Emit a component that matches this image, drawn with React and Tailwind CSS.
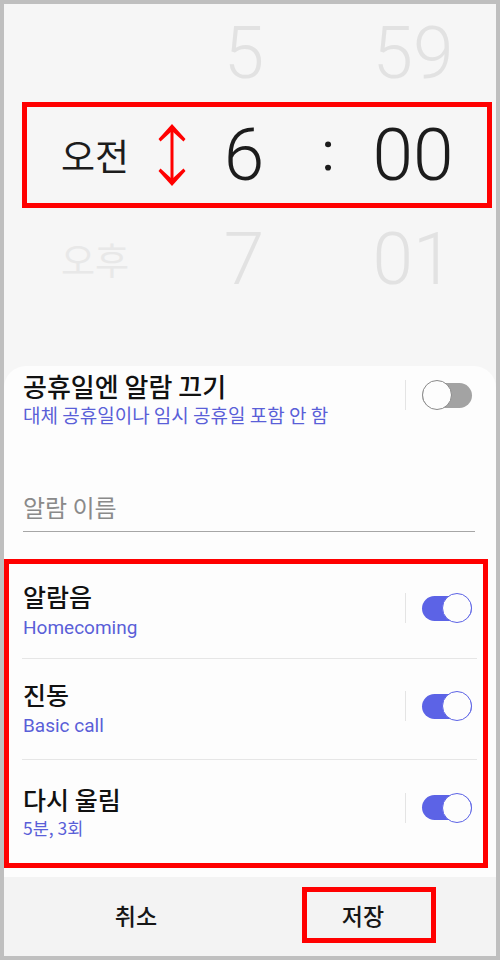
import React from 'react';

const BLUE_TEXT = 'text-[#5a5fd8]';

function UpDownArrow() {
  return (
    <svg width="28" height="62" viewBox="0 0 28 62" className="shrink-0">
      <rect x="12.5" y="4" width="3" height="54" fill="#ff0000" />
      <path d="M14 0 L27.5 15 L25.5 17.5 L14 7 L2.5 17.5 L0.5 15 Z" fill="#ff0000" />
      <path d="M14 62 L27.5 47 L25.5 44.5 L14 55 L2.5 44.5 L0.5 47 Z" fill="#ff0000" />
    </svg>
  );
}

function Toggle({ on }) {
  return (
    <div className="w-[50px] h-[30px] flex items-center">
      <div
        className={
          on
            ? 'w-full h-[25px] rounded-full bg-[#5c63e6] flex items-center justify-end'
            : 'w-full h-[25px] rounded-full bg-[#a3a3a3] flex items-center justify-start'
        }
      >
        <div
          className={
            on
              ? 'w-[30px] h-[30px] shrink-0 rounded-full bg-[#fdfdfd] border-[1.5px] border-[#5c63e6]'
              : 'w-[30px] h-[30px] shrink-0 rounded-full bg-[#fdfdfd] border-[1.5px] border-[#8a8a8a]'
          }
        />
      </div>
    </div>
  );
}

function SettingRow({ title, sub, on, titleClass = 'text-[25px]', subClass = 'text-[19px]', className = '' }) {
  return (
    <div className={`flex items-center ${className}`}>
      <div className="flex-1 flex flex-col">
        <span className={`${titleClass} leading-[32px] font-medium text-[#111]`}>{title}</span>
        <span className={`${subClass} leading-[26px] ${BLUE_TEXT}`}>{sub}</span>
      </div>
      <div className="flex items-center pb-[8px]">
        <div className="w-px h-[30px] bg-[#e4e4e4]" />
        <div className="ml-[16px]">
          <Toggle on={on} />
        </div>
      </div>
    </div>
  );
}

export default function App() {
  const digit = 'text-[73px] font-light leading-none text-center';
  return (
    <div className="w-[500px] h-[960px] border-4 border-[#bfbfbf] bg-[#f6f6f6] flex flex-col font-['Roboto','Noto_Sans_CJK_KR',sans-serif]">
      {/* 시간 선택 */}
      <div className="h-[362px] flex flex-col">
        <div className="h-[98px] flex items-center text-[#e2e2e2]">
          <div className="w-[182px]" />
          <div className={`w-[116px] ${digit}`}>5</div>
          <div className="w-[52px]" />
          <div className={`w-[118px] ${digit}`}>59</div>
        </div>

        <div className="h-[106px] ml-[18px] mr-[4px] border-[5px] border-[#ff0000] flex items-center text-[#1c1c1c]">
          <div className="ml-[34px] w-[69px] text-[37px] leading-none font-['Noto_Sans_CJK_KR',sans-serif]">오전</div>
          <div className="ml-[28px] w-[28px] flex">
            <UpDownArrow />
          </div>
          <div className={`w-[116px] ${digit}`}>6</div>
          <div className="w-[52px] text-[54px] leading-none text-center pb-[6px]">:</div>
          <div className={`w-[118px] ${digit}`}>00</div>
        </div>

        <div className="h-[102px] flex items-center text-[#e2e2e2]">
          <div className="w-[182px] pl-[57px] text-[37px] leading-none text-[#e8e8e8] font-['Noto_Sans_CJK_KR',sans-serif]">오후</div>
          <div className={`w-[116px] ${digit}`}>7</div>
          <div className="w-[52px]" />
          <div className={`w-[118px] ${digit}`}>01</div>
        </div>
      </div>

      {/* 설정 카드 */}
      <div className="h-[511px] rounded-t-[22px] bg-[#fdfdfd] flex flex-col font-['Noto_Sans_CJK_KR',sans-serif]">
        <div className="pt-[4px] pl-[19px] pr-[24px]">
          <SettingRow
            title="공휴일엔 알람 끄기"
            sub="대체 공휴일이나 임시 공휴일 포함 안 함"
            titleClass="text-[26px]"
            subClass="text-[19px]"
            on={false}
          />
        </div>

        <div className="mt-[64px] ml-[19px] mr-[21px] pb-[9px] border-b-[1.5px] border-[#a6a6a6]">
          <span className="text-[24px] leading-[30px] text-[#8a8a8a]">알람 이름</span>
        </div>

        <div className="mt-[27px] mr-[8px] h-[309px] border-[5px] border-[#ff0000] flex flex-col">
          <SettingRow
            title="알람음"
            sub="Homecoming"
            on
            className="h-[94px] pt-[2px] pl-[14px] pr-[11px] font-['Roboto','Noto_Sans_CJK_KR',sans-serif]"
          />
          <div className="ml-[13px] mr-[6px] h-px bg-[#e6e6e6]" />
          <SettingRow
            title="진동"
            sub="Basic call"
            on
            className="h-[100px] pt-[2px] pl-[14px] pr-[11px] font-['Roboto','Noto_Sans_CJK_KR',sans-serif]"
          />
          <div className="ml-[13px] mr-[6px] h-px bg-[#e6e6e6]" />
          <SettingRow
            title="다시 울림"
            sub="5분, 3회"
            subClass="text-[17.5px]"
            on
            className="flex-1 pl-[14px] pr-[11px]"
          />
        </div>
      </div>

      {/* 하단 버튼 */}
      <div className="flex-1 bg-[#f3f3f3] flex items-center pb-[3px] font-['Noto_Sans_CJK_KR',sans-serif] text-[23px] font-medium text-[#161616]">
        <div className="w-[264px] text-center">취소</div>
        <div className="ml-[34px] w-[134px] h-[56px] border-[5px] border-[#ff0000] flex items-center justify-center pr-[12px]">
          저장
        </div>
      </div>
    </div>
  );
}
